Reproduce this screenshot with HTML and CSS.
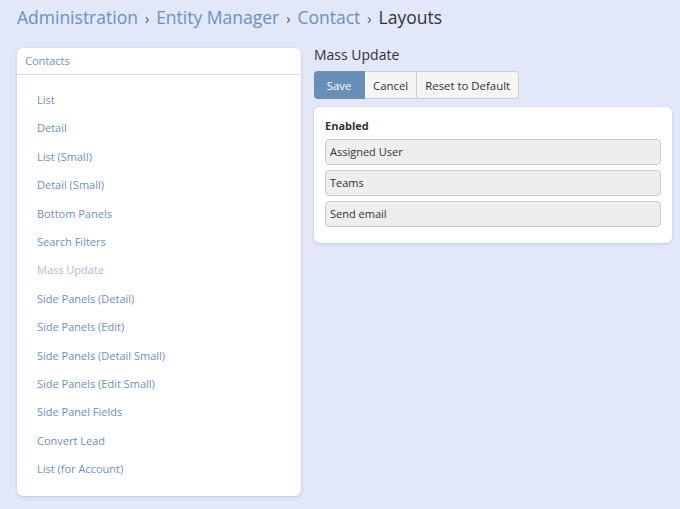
FILE: index.html
```html
<!DOCTYPE html>
<html lang="en">
<head>
    <meta charset="UTF-8">
    <meta name="viewport" content="width=device-width, initial-scale=1.0">
    <title>Layouts</title>
    <link rel="stylesheet" href="styles.css">
</head>
<body>
    <div class="page-header">
        <a href="#">Administration</a>
        <span class="sep">›</span>
        <a href="#">Entity Manager</a>
        <span class="sep">›</span>
        <a href="#">Contact</a>
        <span class="sep">›</span>
        <span class="current">Layouts</span>
    </div>

    <div class="content">
        <div class="side">
            <div class="panel">
                <div class="panel-heading">Contacts</div>
                <ul class="layout-list">
                    <li><a href="#">List</a></li>
                    <li><a href="#">Detail</a></li>
                    <li><a href="#">List (Small)</a></li>
                    <li><a href="#">Detail (Small)</a></li>
                    <li><a href="#">Bottom Panels</a></li>
                    <li><a href="#">Search Filters</a></li>
                    <li><a href="#" class="disabled">Mass Update</a></li>
                    <li><a href="#">Side Panels (Detail)</a></li>
                    <li><a href="#">Side Panels (Edit)</a></li>
                    <li><a href="#">Side Panels (Detail Small)</a></li>
                    <li><a href="#">Side Panels (Edit Small)</a></li>
                    <li><a href="#">Side Panel Fields</a></li>
                    <li><a href="#">Convert Lead</a></li>
                    <li><a href="#">List (for Account)</a></li>
                </ul>
            </div>
        </div>

        <div class="main">
            <h4 class="layout-title">Mass Update</h4>
            <div class="btn-group">
                <button class="btn btn-primary">Save</button>
                <button class="btn">Cancel</button>
                <button class="btn">Reset to Default</button>
            </div>
            <div class="panel panel-body">
                <div class="label">Enabled</div>
                <ul class="enabled-list">
                    <li>Assigned User</li>
                    <li>Teams</li>
                    <li>Send email</li>
                </ul>
            </div>
        </div>
    </div>
</body>
</html>
```

FILE: styles.css
```css
* {
    margin: 0;
    padding: 0;
    box-sizing: border-box;
}

body {
    background-color: #e2e7f9;
    font-family: "Open Sans", "Liberation Sans", sans-serif;
    font-size: 12px;
    color: #333;
    height: 509px;
    overflow: hidden;
}

a {
    color: #6a91c0;
    text-decoration: none;
}

.page-header {
    display: flex;
    align-items: baseline;
    gap: 7px;
    font-size: 17.5px;
    line-height: 26px;
    padding: 4px 17px 0;
    height: 48px;
}
.page-header .sep {
    font-size: 14px;
    color: #555;
}
.page-header .current {
    color: #333;
}

.content {
    display: flex;
    gap: 13px;
    padding: 0 8px 0 17px;
}
.side {
    width: 284px;
}
.main {
    flex: 1;
}

.panel {
    background-color: #fff;
    border-radius: 6px;
    box-shadow: 0 1px 3px rgba(120, 130, 180, 0.35);
}
.panel-heading {
    height: 27px;
    line-height: 26px;
    padding: 0 8px;
    font-size: 11px;
    color: #6a91c0;
    border-bottom: 1px solid #dcdcdc;
}

.layout-list {
    list-style: none;
    padding: 11px 0 12px 20px;
}
.layout-list li {
    line-height: 28.4px;
    font-size: 11px;
}
.layout-list a.disabled {
    color: #a9bcd6;
}

.layout-title {
    font-size: 14px;
    font-weight: normal;
    line-height: 17px;
    margin-top: -2px;
    margin-bottom: 8px;
    color: #333;
}

.btn-group {
    display: flex;
    margin-bottom: 8px;
}
.btn {
    font-family: inherit;
    font-size: 11.4px;
    height: 28px;
    padding: 0 8px;
    color: #333;
    background-color: #f5f5f5;
    border: 1px solid #cfcfcf;
    border-left: none;
}
.btn:last-child {
    border-radius: 0 4px 4px 0;
}
.btn-primary {
    width: 51px;
    color: #fff;
    background-color: #6690ba;
    border-color: #6690ba;
    border-radius: 4px 0 0 4px;
}

.panel-body {
    padding: 12px 11px 16px;
}
.label {
    font-weight: bold;
    font-size: 11px;
    line-height: 14px;
    margin-bottom: 6px;
}
.enabled-list {
    list-style: none;
    display: flex;
    flex-direction: column;
    gap: 5px;
    font-size: 11px;
}
.enabled-list li {
    height: 26px;
    line-height: 24px;
    padding: 0 4px;
    background-color: #eee;
    border: 1px solid #ccc;
    border-radius: 4px;
}
```
